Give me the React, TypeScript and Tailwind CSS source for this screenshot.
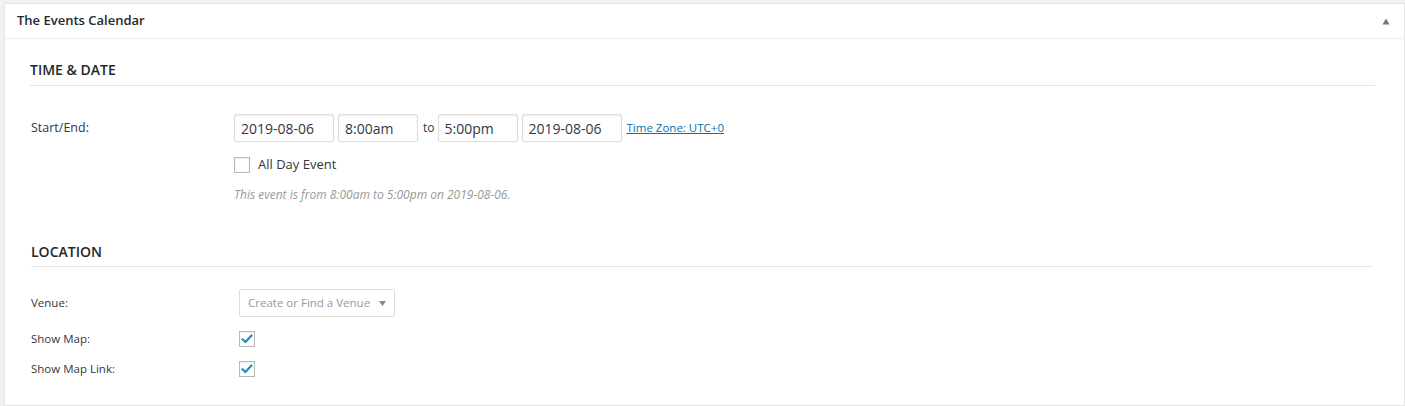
import type { ReactNode } from 'react';

const font = { fontFamily: '"Open Sans", "Noto Sans", Arial, sans-serif' };

function Check({ checked }: { checked?: boolean }) {
  return (
    <span className="flex h-4 w-4 shrink-0 items-center justify-center border border-[#b4b9be] bg-white shadow-[inset_0_1px_2px_rgba(0,0,0,0.07)]">
      {checked && (
        <svg width="12" height="10" viewBox="0 0 12 10" fill="none">
          <path d="M1.5 5.2 L4.4 8 L10.5 1.5" stroke="#1e8cbe" strokeWidth="2.2" strokeLinecap="round" strokeLinejoin="round" />
        </svg>
      )}
    </span>
  );
}

function TextBox({ value, width }: { value: string; width: string }) {
  return (
    <span
      className={`flex h-[28px] items-center rounded-[2px] border border-[#ddd] bg-white px-[6px] text-[14px] text-[#32373c] shadow-[inset_0_1px_2px_rgba(0,0,0,0.07)] ${width}`}
    >
      {value}
    </span>
  );
}

function SectionTitle({ children, className }: { children: ReactNode; className?: string }) {
  return (
    <h3 className={`border-b border-[#e5e5e5] text-[14px] font-semibold uppercase leading-[20px] text-[#23282d] ${className ?? ''}`}>
      {children}
    </h3>
  );
}

function Row({ label, children, className }: { label: string; children: ReactNode; className?: string }) {
  return (
    <div className={`flex items-center ${className ?? ''}`}>
      <span className="w-[208px] shrink-0 text-[11.5px] text-[#32373c]">{label}</span>
      {children}
    </div>
  );
}

export default function App() {
  return (
    <div className="min-h-screen bg-[#f1f1f1] pl-[4px] pt-[3px]" style={font}>
      <div className="h-[403px] border border-[#e5e5e5] bg-white">
        <div className="flex h-[35px] items-center justify-between border-b border-[#eee] pl-[12px] pr-[14px]">
          <span className="text-[13px] font-semibold text-[#23282d]">The Events Calendar</span>
          <svg width="8" height="7" viewBox="0 0 8 7">
            <polygon points="4,0.5 7.5,6.5 0.5,6.5" fill="#72777c" />
          </svg>
        </div>

        <div className="pl-[25px] pr-[29px] pt-[21px]">
          <SectionTitle className="pb-[5px]">Time &amp; Date</SectionTitle>

          <div className="flex pt-[28px]">
            <span className="w-[204px] shrink-0 pl-[1px] pt-[4px] text-[12.5px] leading-[20px] text-[#32373c]">
              Start/End:
            </span>
            <div className="flex flex-col">
              <div className="flex items-center">
                <TextBox value="2019-08-06" width="w-[100px]" />
                <span className="ml-[4px]">
                  <TextBox value="8:00am" width="w-[80px]" />
                </span>
                <span className="ml-[5px] mr-[3px] text-[12px] text-[#32373c]">to</span>
                <TextBox value="5:00pm" width="w-[80px]" />
                <span className="ml-[4px]">
                  <TextBox value="2019-08-06" width="w-[100px]" />
                </span>
                <a className="ml-[5px] text-[11.5px] text-[#0073aa] underline">Time Zone: UTC+0</a>
              </div>
              <label className="mt-[15px] flex h-[16px] items-center gap-[8px] text-[13px] text-[#32373c]">
                <Check />
                All Day Event
              </label>
              <p className="mt-[13px] text-[12px] leading-[18px] italic text-[#999]">
                This event is from 8:00am to 5:00pm on 2019-08-06.
              </p>
            </div>
          </div>
        </div>

        <div className="pl-[26px] pr-[31px] pt-[38px]">
          <SectionTitle className="pb-[4px]">Location</SectionTitle>

          <Row label="Venue:" className="mt-[22px]">
            <span className="flex h-[28px] w-[156px] items-center justify-between rounded-[2px] border border-[#ddd] bg-white pl-[8px] pr-[8px] text-[11.5px] text-[#999]">
              Create or Find a Venue
              <svg width="7" height="5" viewBox="0 0 7 5">
                <polygon points="0,0 7,0 3.5,5" fill="#888" />
              </svg>
            </span>
          </Row>
          <Row label="Show Map:" className="mt-[14px] h-[16px]">
            <Check checked />
          </Row>
          <Row label="Show Map Link:" className="mt-[14px] h-[16px]">
            <Check checked />
          </Row>
        </div>
      </div>
    </div>
  );
}
